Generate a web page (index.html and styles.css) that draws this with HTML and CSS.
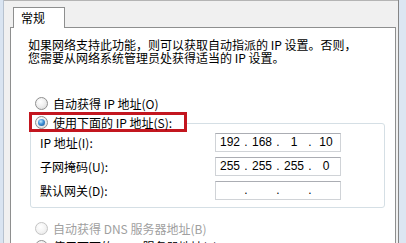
FILE: index.html
```html
<!DOCTYPE html>
<html lang="zh-CN">
<head>
<meta charset="utf-8">
<title>IPv4 属性</title>
<link rel="stylesheet" href="styles.css">
</head>
<body>
<div class="window">
  <div class="edge-left"></div>
  <div class="dialog">
    <div class="tabs"><div class="tab">常规</div></div>
    <div class="panel">
      <p class="intro">如果网络支持此功能，则可以获取自动指派的 IP 设置。否则，<br>您需要从网络系统管理员处获得适当的 IP 设置。</p>
      <div class="option first"><span class="radio"></span><span>自动获得 IP 地址(O)</span></div>
      <div class="group">
        <div class="legend"><span class="radio on"></span><span>使用下面的 IP 地址(S):</span></div>
        <div class="fields">
          <span class="label">IP 地址(I):</span>
          <div class="ip"><span>192</span><span>.</span><span>168</span><span>.</span><span>1</span><span>.</span><span>10</span></div>
          <span class="label">子网掩码(U):</span>
          <div class="ip"><span>255</span><span>.</span><span>255</span><span>.</span><span>255</span><span>.</span><span>0</span></div>
          <span class="label">默认网关(D):</span>
          <div class="ip"><span></span><span>.</span><span></span><span>.</span><span></span><span>.</span><span></span></div>
        </div>
      </div>
      <div class="option dns disabled"><span class="radio"></span><span>自动获得 DNS 服务器地址(B)</span></div>
      <div class="option dns2"><span class="radio on"></span><span>使用下面的 DNS 服务器地址(E):</span></div>
    </div>
  </div>
  <div class="edge-right"></div>
</div>
</body>
</html>
```
FILE: styles.css
```css
html, body {
  margin: 0;
  padding: 0;
}
body {
  width: 406px;
  height: 243px;
  overflow: hidden;
  background: #f0f0f0;
  font-family: "Noto Sans CJK SC", "Noto Sans", sans-serif;
  font-size: 12px;
  color: #000;
}
.window {
  display: flex;
  height: 243px;
}
.edge-left {
  width: 3px;
  background: #d9e4f1;
  border-right: 1px solid #b7c2cf;
}
.edge-right {
  width: 7px;
  background: #dce6f2;
  border-left: 1px solid #858585;
}
.dialog {
  flex: 1;
  display: flex;
  flex-direction: column;
  border-top: 1px solid #b4b4b4;
  padding: 6px 2px 0 6px;
  background: #f0f0f0;
}
.tabs {
  display: flex;
  padding-left: 3px;
}
.tab {
  position: relative;
  z-index: 1;
  box-sizing: border-box;
  width: 52px;
  height: 21px;
  margin-bottom: -1px;
  padding-left: 7px;
  border: 1px solid #8e8f8f;
  border-bottom: none;
  background: #fff;
  line-height: 19px;
}
.panel {
  flex: 1;
  background: #fff;
  border: 1px solid #8e8f8f;
}
.intro {
  margin: 0;
  padding: 10px 0 0 17px;
  line-height: 13px;
  white-space: nowrap;
}
.option {
  display: flex;
  align-items: center;
  gap: 5px;
  height: 16px;
  margin-left: 24px;
  white-space: nowrap;
}
.option.first {
  margin-top: 31px;
}
.option.dns {
  margin-top: 12px;
}
.option.dns2 {
  margin-top: 2px;
}
.option.disabled {
  color: #a0a0a0;
}
.radio {
  box-sizing: border-box;
  flex: none;
  width: 13px;
  height: 13px;
  border-radius: 50%;
  border: 1px solid #8f8f8f;
  background: radial-gradient(circle at 40% 35%, #ffffff 0%, #f0f0f0 45%, #d4d4d4 100%);
  display: flex;
  align-items: center;
  justify-content: center;
}
.disabled .radio {
  border-color: #c4c4c4;
  background: radial-gradient(circle at 40% 35%, #ffffff 0%, #f4f4f4 50%, #e2e2e2 100%);
}
.radio.on::after {
  content: "";
  width: 7px;
  height: 7px;
  border-radius: 50%;
  background: radial-gradient(circle at 40% 35%, #c6ecff 0%, #3d8fd6 45%, #1a4f8c 100%);
}
.group {
  box-sizing: border-box;
  width: 355px;
  margin: 12px 0 0 19px;
  padding: 0 0 7px 9px;
  border: 1px solid #d5dfe5;
  border-radius: 3px;
}
.legend {
  box-sizing: border-box;
  display: flex;
  align-items: center;
  gap: 5px;
  width: 158px;
  height: 20px;
  margin: -12px 0 0 -11px;
  padding-left: 3px;
  border: 3px solid #c3161f;
  background: #fff;
  white-space: nowrap;
}
.fields {
  display: grid;
  grid-template-columns: 175px 126px;
  grid-auto-rows: 19px;
  row-gap: 5px;
  margin-top: 1px;
  align-items: center;
}
.label {
  white-space: nowrap;
}
.ip {
  box-sizing: border-box;
  height: 19px;
  display: grid;
  grid-template-columns: 28px 4px 28px 4px 28px 4px 28px;
  align-items: center;
  border: 1px solid #d0d3d7;
  border-top-color: #abadb3;
  font-family: "Liberation Sans", Arial, sans-serif;
  font-size: 12px;
  line-height: 17px;
  text-align: center;
  color: #000;
}
```
